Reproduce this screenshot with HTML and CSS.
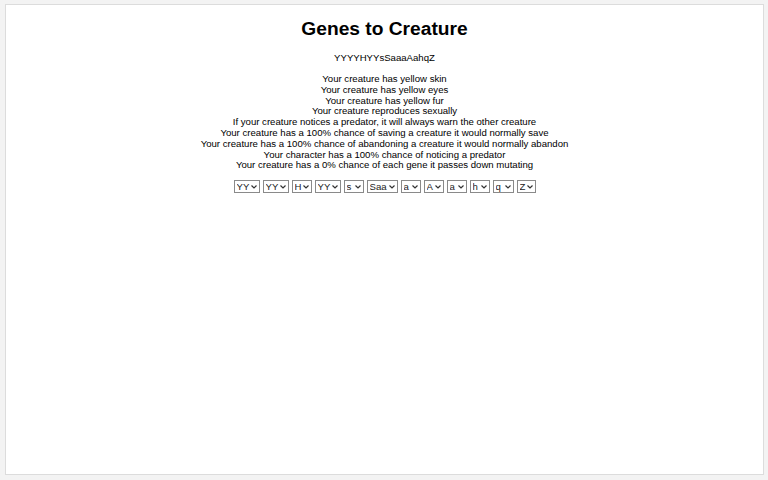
FILE: index.html
```html
<!DOCTYPE html>
<html lang="en">
<head>
    <meta charset="UTF-8">
    <title>Genes to Creature</title>
    <link rel="stylesheet" href="styles.css">
</head>
<body>
    <div class="container">
        <h1>Genes to Creature</h1>
        <p class="genome">YYYYHYYsSaaaAahqZ</p>
        <div class="traits">
            <div>Your creature has yellow skin</div>
            <div>Your creature has yellow eyes</div>
            <div>Your creature has yellow fur</div>
            <div>Your creature reproduces sexually</div>
            <div>If your creature notices a predator, it will always warn the other creature</div>
            <div>Your creature has a 100% chance of saving a creature it would normally save</div>
            <div>Your creature has a 100% chance of abandoning a creature it would normally abandon</div>
            <div>Your character has a 100% chance of noticing a predator</div>
            <div>Your creature has a 0% chance of each gene it passes down mutating</div>
        </div>
        <div class="genes">
            <select><option>YY</option><option>Yy</option><option>yy</option></select>
            <select><option>YY</option><option>Yy</option><option>yy</option></select>
            <select><option>H</option><option>h</option></select>
            <select><option>YY</option><option>Yy</option><option>yy</option></select>
            <select><option>s</option><option>S</option></select>
            <select><option>Saa</option><option>saa</option></select>
            <select><option>a</option><option>A</option></select>
            <select><option>A</option><option>a</option></select>
            <select><option>a</option><option>A</option></select>
            <select><option>h</option><option>H</option></select>
            <select><option>q</option><option>Q</option></select>
            <select><option>Z</option><option>z</option></select>
        </div>
    </div>
</body>
</html>
```
FILE: styles.css
```css
body {
    font-family: "Liberation Sans", Arial, sans-serif;
    background-color: #f3f3f3;
    color: #000;
    margin: 0;
    padding: 4px 4px 4px 5px;
}

.container {
    background-color: #fff;
    border: 1px solid #dcdcdc;
    height: 471px;
    box-sizing: border-box;
    text-align: center;
    padding-top: 13px;
}

h1 {
    font-size: 19.2px;
    margin: 0 0 12px 0;
}

.genome {
    font-size: 9.6px;
    margin: 0 0 11px 0;
}

.traits {
    font-size: 9.6px;
    line-height: 10.8px;
}

.genes {
    margin-top: 9px;
    display: flex;
    justify-content: center;
    gap: 3px;
}

/* small selects with a thin chevron on the right */
.genes select {
    appearance: none;
    font-family: "Liberation Sans", Arial, sans-serif;
    font-size: 9.6px;
    color: #222;
    height: 13px;
    line-height: 11px;
    padding: 0 9px 0 2px;
    border: 1px solid #8a8a8a;
    border-radius: 0;
    background: #fff url("data:image/svg+xml,%3Csvg xmlns='http://www.w3.org/2000/svg' width='6' height='4' viewBox='0 0 6 4'%3E%3Cpath d='M0.5 0.5 L3 3 L5.5 0.5' fill='none' stroke='%23333' stroke-width='1.2'/%3E%3C/svg%3E") no-repeat right 2px center;
}
```
